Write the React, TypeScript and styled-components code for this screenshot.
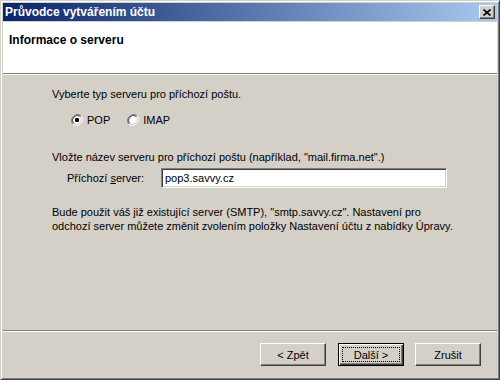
import React, { useState } from 'react';
import styled, { createGlobalStyle } from 'styled-components';

const GlobalStyle = createGlobalStyle`
  html, body {
    margin: 0;
    padding: 0;
    background: #d4d0c8;
  }
  body {
    font-family: "Liberation Sans", Arial, sans-serif;
    font-size: 11px;
    color: #000;
  }
`;

const Window = styled.div`
  box-sizing: border-box;
  width: 500px;
  height: 380px;
  display: flex;
  flex-direction: column;
  background: #d4d0c8;
  border: 1px solid;
  border-color: #d4d0c8 #404040 #404040 #d4d0c8;
  box-shadow: inset 1px 1px #ffffff, inset -1px -1px #808080;
  padding: 2px;
`;

const TitleBar = styled.div`
  height: 18px;
  flex: none;
  display: flex;
  align-items: center;
  justify-content: space-between;
  padding: 0 2px 0 2px;
  background: linear-gradient(to right, #0a246a, #a6caf0);
  color: #fff;
  font-weight: bold;
  font-size: 12px;
  margin-bottom: 1px;
`;

const TitleText = styled.span`
  white-space: nowrap;
`;

const CloseButton = styled.div`
  box-sizing: border-box;
  width: 16px;
  height: 14px;
  background: #d4d0c8;
  border: 1px solid;
  border-color: #fff #404040 #404040 #fff;
  box-shadow: inset -1px -1px #808080;
  display: flex;
  align-items: center;
  justify-content: center;
`;

const Header = styled.div`
  height: 52px;
  flex: none;
  background: #fff;
  border-bottom: 1px solid #808080;
  box-shadow: 0 1px #fff;
  margin-bottom: 1px;
  padding: 11px 0 0 6px;
  box-sizing: border-box;
`;

const HeaderTitle = styled.div`
  font-weight: bold;
  font-size: 12px;
  line-height: 14px;
`;

const Content = styled.div`
  flex: 1;
  display: flex;
  flex-direction: column;
  padding: 12px 0 0 49px;
`;

const Text = styled.div<{ $indent?: number; $top?: number }>`
  line-height: 14px;
  margin-left: ${(p) => p.$indent ?? 0}px;
  margin-top: ${(p) => p.$top ?? 0}px;
  white-space: pre-line;
`;

const RadioRow = styled.div`
  display: flex;
  align-items: center;
  margin: 12px 0 0 19px;
  height: 14px;
`;

const RadioLabel = styled.label`
  display: flex;
  align-items: center;
  gap: 4px;
  margin-right: 17px;
  cursor: default;
`;

const FieldRow = styled.div`
  display: flex;
  align-items: center;
  margin: 4px 0 0 15px;
`;

const FieldLabel = styled.span`
  width: 94px;
`;

const TextInput = styled.input`
  box-sizing: border-box;
  width: 286px;
  height: 20px;
  border: 1px solid;
  border-color: #808080 #fff #fff #808080;
  box-shadow: inset 1px 1px #404040, inset -1px -1px #d4d0c8;
  padding: 0 3px;
  font-family: "Liberation Sans", Arial, sans-serif;
  font-size: 11px;
  outline: none;
  background: #fff;
`;

const Footer = styled.div`
  height: 47px;
  flex: none;
  border-top: 1px solid #808080;
  box-shadow: inset 0 1px #fff;
  display: flex;
  justify-content: flex-end;
  align-items: flex-start;
  padding: 12px 16px 0 0;
  box-sizing: border-box;
`;

const Button = styled.button<{ $default?: boolean; $gap?: number }>`
  box-sizing: border-box;
  width: 66px;
  height: 23px;
  margin-left: ${(p) => p.$gap ?? 0}px;
  background: #d4d0c8;
  font-family: "Liberation Sans", Arial, sans-serif;
  font-size: 11px;
  color: #000;
  padding: 0;
  border: 1px solid;
  border-color: ${(p) => (p.$default ? '#000' : '#fff #404040 #404040 #fff')};
  box-shadow: ${(p) =>
    p.$default
      ? 'inset 1px 1px #fff, inset -1px -1px #404040, inset -2px -2px #808080'
      : 'inset -1px -1px #808080'};
  display: flex;
  align-items: center;
  justify-content: center;
  position: relative;
`;

const FocusRing = styled.span`
  position: absolute;
  inset: 3px;
  border: 1px dotted #000;
`;

const Radio: React.FC<{ checked: boolean }> = ({ checked }) => (
  <svg width="12" height="12" viewBox="0 0 12 12">
    <path d="M10.2 1.8 A6 6 0 0 0 1.8 10.2" fill="none" stroke="#808080" strokeWidth="1" />
    <path d="M1.8 10.2 A6 6 0 0 0 10.2 1.8" fill="none" stroke="#fff" strokeWidth="1" />
    <circle cx="6" cy="6" r="4.5" fill="#fff" />
    <path d="M9.5 2.5 A5 5 0 0 0 2.5 9.5" fill="none" stroke="#404040" strokeWidth="1" />
    <path d="M2.5 9.5 A5 5 0 0 0 9.5 2.5" fill="none" stroke="#d4d0c8" strokeWidth="1" />
    {checked && <rect x="4" y="4" width="4" height="4" rx="1.2" fill="#000" />}
  </svg>
);

const App: React.FC = () => {
  const [type, setType] = useState<'pop' | 'imap'>('pop');
  const [server, setServer] = useState('pop3.savvy.cz');

  return (
    <>
      <GlobalStyle />
      <Window>
        <TitleBar>
          <TitleText>Průvodce vytvářením účtu</TitleText>
          <CloseButton>
            <svg width="8" height="7" viewBox="0 0 8 7">
              <path d="M0.5 0.5 L7.5 6.5 M7.5 0.5 L0.5 6.5" stroke="#000" strokeWidth="1.6" />
            </svg>
          </CloseButton>
        </TitleBar>
        <Header>
          <HeaderTitle>Informace o serveru</HeaderTitle>
        </Header>
        <Content>
          <Text>Vyberte typ serveru pro příchozí poštu.</Text>
          <RadioRow>
            <RadioLabel onClick={() => setType('pop')}>
              <Radio checked={type === 'pop'} />
              POP
            </RadioLabel>
            <RadioLabel onClick={() => setType('imap')}>
              <Radio checked={type === 'imap'} />
              IMAP
            </RadioLabel>
          </RadioRow>
          <Text $top={23}>Vložte název serveru pro příchozí poštu (například, "mail.firma.net".)</Text>
          <FieldRow>
            <FieldLabel>
              Příchozí <u>s</u>erver:
            </FieldLabel>
            <TextInput value={server} onChange={(e) => setServer(e.target.value)} />
          </FieldRow>
          <Text $top={17}>
            {'Bude použit váš již existující server (SMTP), "smtp.savvy.cz". Nastavení pro\nodchozí server můžete změnit zvolením položky Nastavení účtu z nabídky Úpravy.'}
          </Text>
        </Content>
        <Footer>
          <Button>&lt; Zpět</Button>
          <Button $default $gap={12}>
            <FocusRing />
            Další &gt;
          </Button>
          <Button $gap={11}>Zrušit</Button>
        </Footer>
      </Window>
    </>
  );
};

export default App;
